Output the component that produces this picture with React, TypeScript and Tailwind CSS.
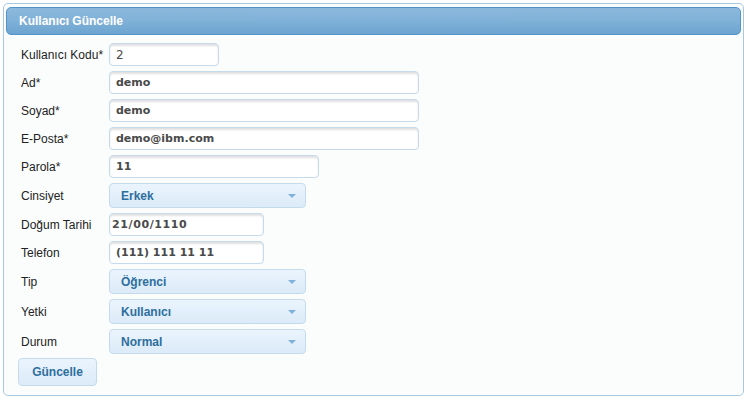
import React from 'react'

const inputCls =
  "h-[23px] rounded-[4px] border border-[#c5dbec] bg-white text-[11px] text-[#4a4a4a] font-['DejaVu_Sans',sans-serif] shadow-[inset_0_2px_2px_rgba(0,0,0,0.12)] outline-none"

function Field({ label, value, width, bold = true, pad = 'px-[6px]' }: { label: string; value: string; width: string; bold?: boolean; pad?: string }) {
  return (
    <div className="flex items-center">
      <label className="w-[88px] shrink-0 text-[12px] text-[#222]">{label}</label>
      <input readOnly value={value} className={`${inputCls} ${width} ${pad} ${bold ? 'font-bold' : 'font-normal text-[12px]'}`} />
    </div>
  )
}

function Select({ label, value }: { label: string; value: string }) {
  return (
    <div className="flex items-center">
      <span className="w-[88px] shrink-0 text-[12px] text-[#222]">{label}</span>
      <div className="flex h-[25px] w-[197px] items-center justify-between rounded-[4px] border border-[#c5dbec] bg-gradient-to-b from-[#eaf4fd] to-[#dcebf8] pl-[11px] pr-[9px]">
        <span className="text-[12px] font-bold text-[#2e6e9e]">{value}</span>
        <svg width="8" height="4" viewBox="0 0 8 4">
          <path d="M0 0h8L4 4z" fill="#7fb2da" />
        </svg>
      </div>
    </div>
  )
}

export default function App() {
  return (
    <div className="h-[403px] w-[748px] bg-white pl-[3px] pt-[3px] font-['Liberation_Sans',Arial,sans-serif]">
      <div className="h-[393px] w-[741px] rounded-[5px] border border-[#a6c9e2] bg-[#fbfdfd] px-[2px] pt-[3px]">
        <div className="flex h-[28px] items-center rounded-[5px] border border-[#4f94cd] bg-gradient-to-b from-[#8bb9dc] via-[#80b1d8] to-[#6ca4cf] pl-[12px]">
          <span className="text-[12px] font-bold text-white">Kullanıcı Güncelle</span>
        </div>
        <div className="flex flex-col gap-[5px] pl-[15px] pt-[8px]">
          <Field label="Kullanıcı Kodu*" value="2" width="w-[110px]" bold={false} />
          <Field label="Ad*" value="demo" width="w-[310px]" />
          <Field label="Soyad*" value="demo" width="w-[310px]" />
          <Field label="E-Posta*" value="demo@ibm.com" width="w-[310px]" />
          <Field label="Parola*" value="11" width="w-[210px]" />
          <Select label="Cinsiyet" value="Erkek" />
          <Field label="Doğum Tarihi" value="21/00/1110" width="w-[155px]" pad="px-[2px] tracking-[0.6px]" />
          <Field label="Telefon" value="(111) 111 11 11" width="w-[155px]" />
          <Select label="Tip" value="Öğrenci" />
          <Select label="Yetki" value="Kullanıcı" />
          <Select label="Durum" value="Normal" />
          <div className="-ml-[3px] -mt-[1px]">
            <button className="h-[28px] w-[79px] rounded-[4px] border border-[#c5dbec] bg-gradient-to-b from-[#eaf4fd] to-[#dcebf8] text-[12px] font-bold text-[#2e6e9e]">
              Güncelle
            </button>
          </div>
        </div>
      </div>
    </div>
  )
}
